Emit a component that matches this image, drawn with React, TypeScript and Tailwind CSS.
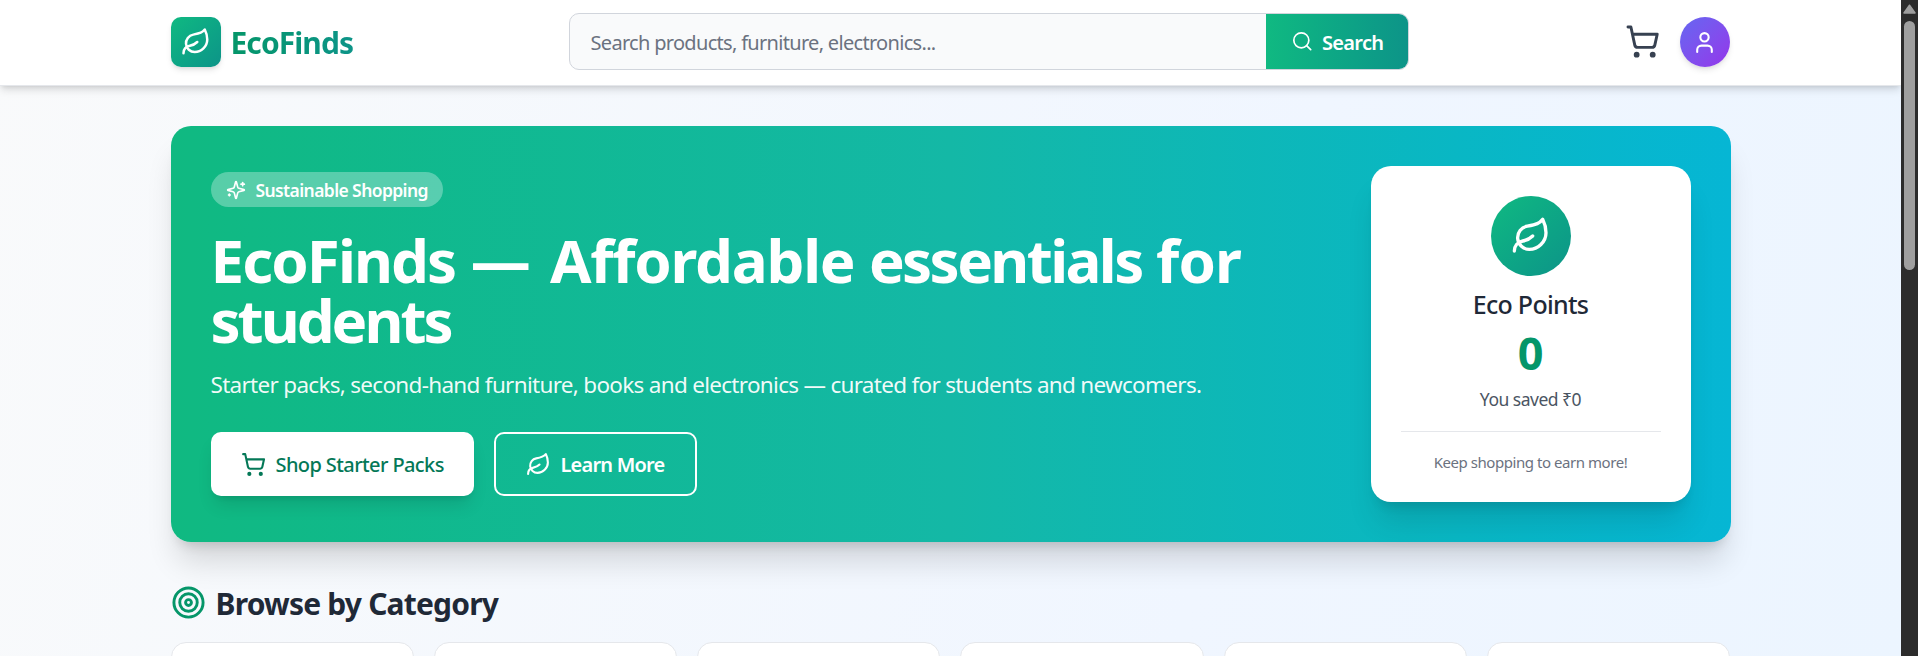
import { Leaf, Search, ShoppingCart, Target, User } from "lucide-react";

const CATEGORIES = ["Furniture", "Books", "Electronics", "Kitchen", "Clothing", "Sports"];

function SparklesIcon() {
  return (
    <svg width="20" height="20" viewBox="0 0 24 24" fill="none" stroke="currentColor" strokeWidth="2" strokeLinecap="round" strokeLinejoin="round">
      <path d="M9.937 15.5A2 2 0 0 0 8.5 14.063l-6.135-1.582a.5.5 0 0 1 0-.962L8.5 9.936A2 2 0 0 0 9.937 8.5l1.582-6.135a.5.5 0 0 1 .963 0L14.063 8.5A2 2 0 0 0 15.5 9.937l6.135 1.581a.5.5 0 0 1 0 .964L15.5 14.063a2 2 0 0 0-1.437 1.437l-1.582 6.135a.5.5 0 0 1-.963 0z" />
      <path d="M20 3v4" />
      <path d="M22 5h-4" />
      <path d="M4 17v2" />
      <path d="M5 18H3" />
    </svg>
  );
}

function Header() {
  return (
    <header className="relative z-10 h-[86px] border-b border-gray-200 bg-white shadow-[0_5px_8px_-1px_rgba(0,0,0,0.12),0_2px_5px_-2px_rgba(0,0,0,0.12)]">
      <div className="mx-auto flex h-[84px] w-[1560px] items-center justify-between">
        <div className="flex w-[398px] items-center gap-[10px]">
          <div className="flex h-[50px] w-[50px] items-center justify-center rounded-[10px] bg-linear-to-br from-[#10b981] to-[#0d9488] text-white shadow-md">
            <Leaf size={30} />
          </div>
          <span className="mt-[2px] bg-linear-to-r from-[#059669] to-[#0d9488] bg-clip-text text-[30px] leading-[40px] font-bold tracking-[-0.93px] text-transparent">
            EcoFinds
          </span>
        </div>

        <div className="mb-px flex h-[57px] w-[840px] overflow-hidden rounded-[10px] border border-gray-300 bg-[#f9fafb]">
          <div className="flex flex-1 items-center pt-[3px] pl-[21px] text-[20px] tracking-[-0.69px] text-[#6b7280]">
            Search products, furniture, electronics...
          </div>
          <button className="flex w-[142px] items-center gap-[9px] bg-linear-to-r from-[#10b981] to-[#0d9488] pl-[25px] text-[20px] font-semibold tracking-[-0.7px] text-white">
            <Search size={22.5} strokeWidth={1.8} />
            <span className="pt-[3px]">Search</span>
          </button>
        </div>

        <div className="flex w-[322px] items-center justify-end gap-5 pr-px">
          <ShoppingCart size={35} className="mb-px text-[#374151]" />
          <div className="flex h-[50px] w-[50px] items-center justify-center rounded-full bg-linear-to-br from-[#6366f1] to-[#9333ea] text-white shadow-md">
            <User size={25} />
          </div>
        </div>
      </div>
    </header>
  );
}

function PointsCard() {
  return (
    <div className="flex h-[336px] w-[320px] shrink-0 flex-col items-center rounded-[20px] bg-white px-[30px] pt-[30px] shadow-[0_25px_31px_-6px_rgba(0,0,0,0.12),0_10px_12px_-7px_rgba(0,0,0,0.12)]">
      <div className="flex h-20 w-20 items-center justify-center rounded-full bg-linear-to-br from-[#10b981] to-[#0d9488] text-white">
        <Leaf size={40} />
      </div>
      <div className="mt-[11px] text-[25px] leading-[35px] font-medium tracking-[-0.7px] text-[#1f2937]">Eco Points</div>
      <div className="mt-[6px] text-[45px] leading-[50px] font-bold text-[#059669]">0</div>
      <div className="mt-[9px] text-[17.5px] leading-[25px] tracking-[-0.5px] text-[#4b5563]">You saved ₹0</div>
      <div className="mt-[19px] w-full border-t border-gray-200 pt-[19px] text-center text-[15px] leading-[22px] tracking-[-0.45px] text-[#6b7280]">
        Keep shopping to earn more!
      </div>
    </div>
  );
}

function Hero() {
  return (
    <section className="flex h-[416px] items-center justify-between rounded-[20px] bg-linear-to-r from-[#10b981] via-[#14b8a6] to-[#06b6d4] px-10 shadow-[0_25px_31px_-6px_rgba(0,0,0,0.14),0_10px_12px_-7px_rgba(0,0,0,0.14)]">
      <div className="flex h-[324px] flex-col items-start text-white">
        <div className="flex h-[35px] w-[232px] items-center gap-[10px] rounded-full bg-white/30 pl-[15px] text-[17.5px] font-semibold tracking-[-0.6px] whitespace-nowrap">
          <SparklesIcon />
          <span className="pt-[2px]">Sustainable Shopping</span>
        </div>
        <h1 className="mt-[23px] w-[1100px] text-[60px] leading-[60px] font-bold tracking-[-1.2px]">
          <span className="tracking-[-1.9px]">EcoFinds</span> <span className="mr-[6px] ml-px">—</span> Affordable{" "}
          <span className="tracking-[-2.6px]">essentials</span> <span className="tracking-[-0.9px]">for</span>
          <br />
          <span className="tracking-[-3px]">students</span>
        </h1>
        <p className="mt-[17px] text-[22.5px] leading-[35px] tracking-[-0.7px] text-white/95">
          Starter packs, second-hand furniture, books and electronics — curated for students and newcomers.
        </p>
        <div className="mt-auto flex gap-5">
          <button className="flex h-16 w-[263px] items-center gap-[10px] rounded-[10px] bg-white pl-[30px] text-[20px] font-medium tracking-[-0.6px] whitespace-nowrap text-[#047857] shadow-[0_12px_18px_-4px_rgba(0,0,0,0.12),0_5px_7px_-5px_rgba(0,0,0,0.12)]">
            <ShoppingCart size={25} />
            <span className="pt-[2px]">Shop Starter Packs</span>
          </button>
          <button className="flex h-16 w-[203px] items-center gap-[10px] rounded-[10px] border-2 border-white pl-[30px] text-[20px] font-semibold tracking-[-0.8px] whitespace-nowrap">
            <Leaf size={25} />
            <span className="pt-[2px]">Learn More</span>
          </button>
        </div>
      </div>
      <PointsCard />
    </section>
  );
}

export default function App() {
  return (
    <div className="flex h-[656px] w-full overflow-hidden font-['Noto_Sans',sans-serif]">
      <div className="w-[1901px] shrink-0 overflow-hidden bg-[linear-gradient(105deg,#f9fafb_0%,#f0f6ff_65%,#ecf5ff_100%)]">
        <Header />
        <main className="mx-auto mt-10 w-[1560px]">
          <Hero />
          <h2 className="mt-[40px] flex h-[40px] items-center gap-[10px] text-[30px] font-bold tracking-[-0.8px] text-[#1f2937]">
            <Target size={35} className="text-[#059669]" />
            <span className="pt-[2px]">Browse by Category</span>
          </h2>
          <div className="mt-[20px] grid grid-cols-6 gap-5">
            {CATEGORIES.map((name) => (
              <div key={name} className="h-[180px] rounded-[15px] border border-gray-200 bg-white" />
            ))}
          </div>
        </main>
      </div>

      {/* Scrollbar */}
      <div className="flex flex-1 flex-col items-center bg-[#2c2c2c] pt-1">
        <svg width="13" height="10" viewBox="0 0 13 10" fill="#9f9f9f" stroke="#9f9f9f" strokeWidth="1.5" strokeLinejoin="round">
          <path d="M6.5 1.2 12 9H1Z" />
        </svg>
        <div className="mt-[7px] h-[249px] w-[11px] rounded-full bg-[#9f9f9f]" />
      </div>
    </div>
  );
}
